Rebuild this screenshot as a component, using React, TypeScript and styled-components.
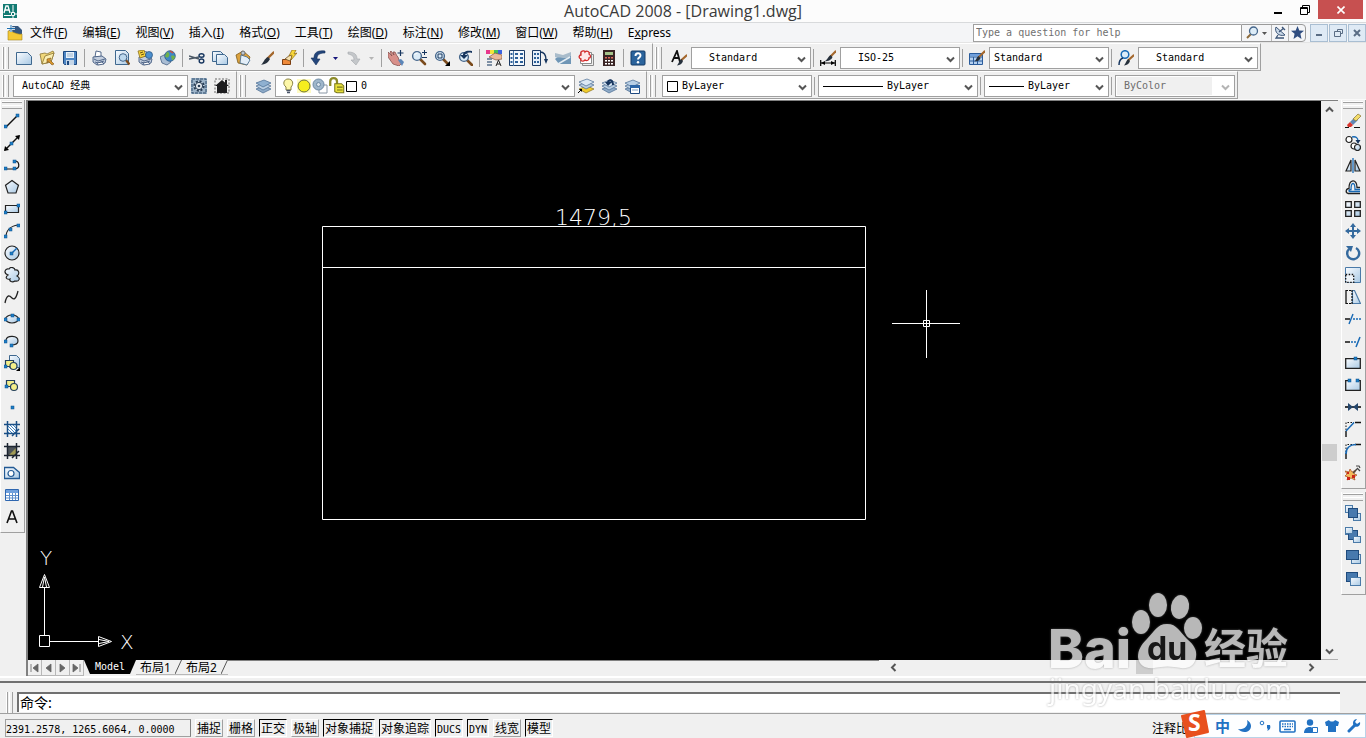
import React from "react";
import styled, { createGlobalStyle, css } from "styled-components";

const mono = `"DejaVu Sans Mono", "Noto Sans CJK SC", monospace`;
const ui = `"Noto Sans", "Noto Sans CJK SC", sans-serif`;
const face = "#f0f0f0";
const shade = "#a0a0a0";

const GlobalStyle = createGlobalStyle`
  * { box-sizing: border-box; }
  body { margin: 0; background: ${face}; font-family: ${ui}; font-size: 12px; color: #000; }
  button, input, select { font: inherit; color: inherit; margin: 0; padding: 0; border: 0; background: none; border-radius: 0; }
  svg { display: block; flex: none; }
`;

const Window = styled.div`
  display: flex;
  flex-direction: column;
  min-height: 100vh;
  position: relative;
  overflow: hidden;
`;

const TitleBar = styled.header`
  display: grid;
  grid-template-columns: 1fr auto 1fr;
  height: 23px;
  background: #fcfcfc;
  border-bottom: 1px solid #d8dadc;
`;
const TitleIcon = styled.div`
  padding: 4px 3px;
`;
const Title = styled.h1`
  margin: 0;
  font: 400 16px/23px "Open Sans", sans-serif;
  color: #3a3a3a;
`;
const WindowButtons = styled.div`
  display: flex;
  justify-content: flex-end;
  padding-right: 3px;
`;
const WindowButton = styled.button<{ $close?: boolean }>`
  width: ${(p) => (p.$close ? 45 : 27)}px;
  height: 19px;
  display: grid;
  place-items: center;
  background: ${(p) => (p.$close ? "#c75050" : "transparent")};
`;

const MenuBar = styled.nav`
  display: flex;
  align-items: center;
  height: 20px;
  background: #f4f5f7;
  border-bottom: 1px solid #e4e4e4;
  padding-left: 7px;
`;
const Menus = styled.div`
  display: flex;
  flex: 1;
  gap: 15px;
  padding-left: 7px;
`;
const MenuItem = styled.button`
  line-height: 19px;
  white-space: nowrap;
  u { text-underline-offset: 1px; }
`;
const HelpSearch = styled.input`
  width: 268px;
  height: 18px;
  padding: 0 2px;
  background: #fff;
  border: 1px solid ${shade};
  border-right: 0;
  font: 10px/16px ${mono};
  &::placeholder { color: #707070; opacity: 1; }
`;
const InfoGroup = styled.div`
  display: flex;
  height: 18px;
  border: 1px solid #9a9a9a;
  border-radius: 0 4px 4px 0;
  margin-right: 4px;
`;
const InfoButton = styled.button<{ $wide?: boolean }>`
  width: ${(p) => (p.$wide ? 29 : 17)}px;
  display: flex;
  align-items: center;
  justify-content: center;
  gap: 3px;
  & + & { border-left: 1px solid #b4b4b4; }
`;
const ChildButtons = styled.div`
  display: flex;
  gap: 1px;
`;
const ChildButton = styled.button`
  width: 18px;
  height: 18px;
  display: grid;
  place-items: center;
  border: 1px solid #a9bed2;
  background: #dfeaf5;
`;

const ToolbarRow = styled.div`
  display: flex;
  height: 28px;
`;
const Bar = styled.div`
  display: flex;
  align-items: center;
  height: 28px;
  padding: 2px 2px 0 3px;
  border-right: 1px solid ${shade};
  border-bottom: 1px solid ${shade};
  border-top: 1px solid #fff;
`;
const Grip = styled.div<{ $flat?: boolean; $gap?: number }>`
  flex: none;
  border: solid ${shade};
  ${(p) =>
    p.$flat
      ? css`
          height: 7px;
          margin: 2px 2px 1px 1px;
          border-width: 1px 0;
          box-shadow: 0 -1px #fff, inset 0 -2px ${face}, inset 0 -3px #fff;
        `
      : css`
          width: 6px;
          height: 22px;
          margin-right: ${p.$gap ?? 4}px;
          border-width: 0 1px;
          box-shadow: -1px 0 #fff, inset -2px 0 ${face}, inset -3px 0 #fff;
        `}
`;
const ToolButton = styled.button<{ $narrow?: boolean }>`
  flex: none;
  width: ${(p) => (p.$narrow ? 13 : 23)}px;
  height: 22px;
  padding: 3px;
`;
const Separator = styled.div`
  flex: none;
  width: 6px;
  height: 18px;
  background: linear-gradient(${shade}, ${shade}) 2px 0 / 1px 100% no-repeat;
`;
const ComboBox = styled.label<{ $width: number; $off?: boolean }>`
  position: relative;
  display: flex;
  align-items: center;
  width: ${(p) => p.$width}px;
  height: 22px;
  border: 1px solid ${shade};
  background: ${(p) => (p.$off ? face : "#fff")};
  box-shadow: ${(p) => (p.$off ? "inset 0 0 0 1px #fff, inset -22px 0 #fff" : "none")};
`;
const ComboLead = styled.span`
  display: flex;
  align-items: center;
  padding-left: 4px;
`;
const ComboSelect = styled.select<{ $indent: number }>`
  appearance: none;
  flex: 1;
  min-width: 0;
  height: 20px;
  padding: 0 18px 0 ${(p) => p.$indent}px;
  font: 10px/20px ${mono};
  outline: 0;
  &:disabled { opacity: 1; color: #6d6d6d; }
`;
const ComboArrow = styled.span`
  position: absolute;
  right: 4px;
  top: 7px;
  pointer-events: none;
`;

const Main = styled.main`
  display: flex;
  flex: 1;
  border-top: 1px solid #fafafa;
`;
const SideColumn = styled.aside`
  width: 26px;
  flex: none;
`;
const SideBar = styled.div<{ $right?: boolean }>`
  display: flex;
  flex-direction: column;
  padding: 0 0 4px;
  border-right: 1px solid ${shade};
  border-bottom: 1px solid ${shade};
  border-left: 1px solid #fff;
  margin: ${(p) => (p.$right ? "0 0 3px 1px" : "0 1px 3px 0")};
`;
const SideButton = styled.button`
  width: 23px;
  height: 22px;
  padding: 3px;
`;
const Workspace = styled.section`
  flex: 1;
  min-width: 0;
  display: flex;
  flex-direction: column;
  border-left: 2px solid #808080;
  border-top: 1px solid #808080;
  margin-right: 2px;
`;
const ViewRow = styled.div`
  flex: 1;
  display: flex;
`;
const Canvas = styled.div`
  flex: 1;
  position: relative;
  overflow: hidden;
  background: #000;
`;
const Model = styled.svg`
  position: absolute;
  inset: 0;
  width: 100%;
  height: 100%;
  text { font: 200 22px "DejaVu Sans", "DejaVu Sans Light", sans-serif; }
`;
const UcsIcon = styled.svg`
  position: absolute;
  left: 0;
  bottom: 0;
  text { font: 200 20px "DejaVu Sans", "DejaVu Sans Light", sans-serif; }
`;
const VScroll = styled.div`
  width: 17px;
  display: flex;
  flex-direction: column;
  align-items: center;
  padding: 4px 0 3px;
  border-bottom: 1px solid #b0b0b0;
`;
const Track = styled.div<{ $share: number }>`
  flex: ${(p) => p.$share};
`;
const Thumb = styled.div<{ $h?: boolean }>`
  width: ${(p) => (p.$h ? 17 : 15)}px;
  height: ${(p) => (p.$h ? 14 : 17)}px;
  background: #cdcdcd;
`;
const TabRow = styled.div`
  display: flex;
  height: 16px;
  align-items: stretch;
`;
const TabNav = styled.button`
  width: 14px;
  display: grid;
  place-items: center;
  border-right: 1px solid #b8b8b8;
  border-bottom: 1px solid #b8b8b8;
`;
const ModelTab = styled.button`
  width: 52px;
  height: 14px;
  background: #000;
  color: #fff;
  clip-path: polygon(0 0, 100% 0, 46px 100%, 6px 100%);
  font: 10px/14px ${mono};
`;
const LayoutTab = styled.button`
  width: 46px;
  height: 15px;
  display: flex;
  justify-content: space-between;
  padding-left: 4px;
  font: 12px/15px ${ui};
  border-bottom: 1px solid #b8b8b8;
`;
const TabFill = styled.div`
  flex: 649;
  border-top: 1px solid #808080;
`;
const HScroll = styled.div`
  flex: 425;
  display: flex;
  align-items: center;
  padding: 0 22px 2px 10px;
`;

const CommandPane = styled.div`
  flex: none;
  border-top: 2px solid #fff;
`;
const CommandEdge = styled.div`
  height: 5px;
  border-bottom: 2px solid #707070;
`;
const CommandRow = styled.div`
  display: flex;
  padding: 9px 26px 0 7px;
  height: 30px;
`;
const CommandInput = styled.input`
  flex: 1;
  height: 20px;
  background: #fff;
  border-left: 2px solid #707070;
  border-top: 2px solid #707070;
  padding: 0 0 2px 1px;
  font: 14px/16px "Noto Sans CJK SC", sans-serif;
`;
const StatusBar = styled.footer`
  flex: none;
  display: flex;
  align-items: center;
  gap: 4px;
  height: 25px;
  border-top: 1px solid ${shade};
  padding: 4px 0 0 5px;
`;
const Coordinates = styled.output`
  width: 186px;
  height: 18px;
  border: 1px solid ${shade};
  border-right-color: #808080;
  font: 10px/19px ${mono};
  white-space: pre;
`;
const Toggle = styled.button<{ $width: number; $on?: boolean; $latin?: boolean }>`
  width: ${(p) => p.$width}px;
  height: 18px;
  padding-top: 1px;
  white-space: nowrap;
  font: ${(p) => (p.$latin ? 10 : 12)}px/17px ${mono};
  border: 1px solid;
  border-color: ${(p) => (p.$on ? "#000 #fff #fff #000" : "#fff #a0a0a0 #a0a0a0 #fff")};
`;
const ScaleLabel = styled.span`
  margin-left: auto;
  padding-right: 178px;
  white-space: nowrap;
`;

const ImeBar = styled.div`
  position: absolute;
  right: 0;
  bottom: 0;
  width: 172px;
  height: 24px;
  display: flex;
  align-items: center;
  justify-content: space-between;
  padding: 0 4px 0 20px;
  background: #fdfeff;
  border: 1px solid #b9d3e8;
`;
const ImeLogo = styled.svg`
  position: absolute;
  left: -15px;
  bottom: -1px;
  overflow: visible;
  text { font: 700 23px "Open Sans", sans-serif; }
`;
const ImeButton = styled.button`
  color: #2272c3;
  font: 700 15px/20px "Noto Sans CJK SC", sans-serif;
`;
const Watermark = styled.svg`
  position: absolute;
  right: 70px;
  bottom: 21px;
  pointer-events: none;
  opacity: 0.72;
  filter: drop-shadow(0 0 1px rgba(120, 120, 120, 0.8));
`;

const N = "#17365f";
const B = "#1769b5";
const sky = "url(#sky)";

const Dot = ({ x, y }: { x: number; y: number }) => (
  <rect x={x} y={y} width="3" height="3" fill="#1e7fc6" stroke="#0d4f8c" strokeWidth=".5" />
);
const Lens = ({ cx = 7, cy = 6 }: { cx?: number; cy?: number }) => (
  <>
    <path d={`M${cx + 3} ${cy + 3}l5 5`} stroke="#7a4a1c" strokeWidth="2.6" strokeLinecap="round" />
    <circle cx={cx} cy={cy} r="4.4" fill="#dcecf8" stroke="#46678c" strokeWidth="1.4" />
    <path d={`M${cx - 2.4} ${cy - 1}a3 3 0 0 1 3-2`} stroke="#fff" fill="none" />
  </>
);
const Brush = () => (
  <>
    <path d="M15.500 2.500L9.500 8.500" stroke="#a4672c" strokeWidth="2.400" strokeLinecap="round" />
    <path d="M10 7l2 2c-2 4-5 5-9 6 3-3 3-6 7-8z" fill="#26303c" />
  </>
);
const SmallBrush = () => (
  <>
    <path d="M15.500 5.500l-5 4.500" stroke="#a4672c" strokeWidth="2.200" strokeLinecap="round" />
    <path d="M10.500 9l1.500 2c-1 3-3 4-6 4.500 2-2 2-5 4.500-6.500z" fill="#26303c" />
  </>
);
const Sheets = ({ top = "#a9c4dd" }: { top?: string }) => (
  <g strokeWidth=".7">
    <path d="M1 11l8-3 7 3-8 4z" fill="#8fabc8" stroke="#486a90" />
    <path d="M1 8l8-3 7 3-8 4z" fill="#b9cee2" stroke="#486a90" />
    <path d="M1 5l8-3 7 3-8 4z" fill={top} stroke="#486a90" />
  </g>
);
const Printer = () => (
  <g stroke="#445b80" strokeWidth=".9">
    <path d="M4 7l1-6 5 1v5z" fill="#fff" />
    <path d="M2 7l9-1 4 3-1 4-8 2-4-3z" fill="#c3cede" />
    <path d="M3 9l4 2 7-2M4 12l3 1 6-2" fill="none" />
    <path d="M6 13l5-1 2 2-6 1z" fill="#fff" />
  </g>
);
const Squares = ({ k }: { k: number }) => {
  const light = { fill: sky, stroke: "#4a7aa8" };
  const dark = { fill: "#4779ae", stroke: "#1f4b7d" };
  return (
    <g>
      {k < 2 && <rect x=".5" y=".5" width="7" height="7" {...light} />}
      {k === 0 && <rect x="8.500" y="8.500" width="7" height="7" {...light} />}
      {k < 2 && <rect x="3.500" y="3.500" width="9" height="9" {...dark} />}
      {k === 1 && <rect x="8.500" y="9.500" width="7" height="6" {...light} />}
      {k === 1 && <rect x=".5" y=".5" width="7" height="6" {...light} />}
      {k === 2 && <rect x="6.500" y="5.500" width="9" height="9" {...light} />}
      {k === 2 && <rect x="1.500" y="1.500" width="12" height="9" {...dark} />}
      {k === 3 && <rect x="1.500" y="1.500" width="11" height="9" {...dark} />}
      {k === 3 && <rect x="5.500" y="6.500" width="10" height="8" {...light} />}
    </g>
  );
};
const Hatch = ({ solid }: { solid?: boolean }) => (
  <>
    <rect x="3" y="3" width="10" height="10" fill={solid ? "#4c5359" : "#fff"} />
    {solid ? (
      <path d="M4 13L13 4v9z" fill="#a09a55" />
    ) : (
      <path d="M3 10l3 3M3 7l6 6M3 4l9 9M5 3l8 8M8 3l5 5M11 3l2 2" stroke={B} strokeWidth=".8" />
    )}
    <path d="M3.500 0v16M12.500 0v16M0 3.500h16M0 12.500h16M8 15l7-7" stroke={solid ? "#1c2430" : "#1a4f86"} strokeWidth="1.500" fill="none" />
  </>
);

const icons: Record<string, React.ReactNode> = {
  new: <path d="M.5 2.500h11l4 4v8H.5z" fill={sky} stroke="#3f688f" />,
  open: (
    <>
      <path d="M1 4l5-1 2 1 6-3 1 2-3 9-9 2z" fill="#f0d77a" stroke="#8a7432" strokeWidth=".8" />
      <path d="M3 14L6 6l9-3-3 9z" fill="#fbeeb0" stroke="#8a7432" strokeWidth=".8" />
      <path d="M8 9l4-1-1 2 4 4-2 1-4-4-1 2z" fill="#d8952c" stroke="#80551a" strokeWidth=".6" />
    </>
  ),
  save: (
    <>
      <path d="M1.500 1.500h13v13h-12l-1-1z" fill="#4e86c4" stroke="#1d4880" />
      <path d="M4 2h8v6H4z" fill="#eaf2fa" />
      <path d="M5 4h6M5 6h6" stroke="#9ab4ce" />
      <path d="M4 10h8v5H4z" fill="#c5d6e8" />
      <path d="M5 11h2v4H5z" fill="#1d4880" />
    </>
  ),
  plot: <Printer />,
  preview: (
    <>
      <path d="M1.500.5h10l3 3v11h-13z" fill={sky} stroke="#3f688f" />
      <path d="M11.500 9.500l4 5" stroke="#7a4a1c" strokeWidth="2.200" />
      <circle cx="9" cy="7.500" r="3.800" fill="#bcd8ee" stroke="#46678c" />
    </>
  ),
  publish: (
    <>
      <Printer />
      <path d="M1 1l6-1 2 6-6 2z" fill="#f5d23c" stroke="#8a7020" strokeWidth=".8" />
      <circle cx="12" cy="5" r="3.500" fill="#4c8fce" stroke="#23507c" strokeWidth=".7" />
      <path d="M3 3l3-1M4 5l3-1" stroke="#6b5512" />
    </>
  ),
  web: (
    <>
      <path d="M0 7l6-3 5 8-4 3-5-2z" fill="#a9bdd4" stroke="#476184" strokeWidth=".8" />
      <circle cx="10" cy="6" r="5.300" fill="#3f87c6" stroke="#23507c" strokeWidth=".7" />
      <path d="M7 2c2 0 3 2 2 4s-3 2-4 0zM11 6c2-1 4 0 4 1s-2 4-3 3z" fill="#70b04a" />
      <path d="M10 1l3 2" stroke="#d84a32" strokeWidth="1.500" />
    </>
  ),
  cut: (
    <g fill="none">
      <path d="M0 6l10 3M0 9l10-2" stroke="#4c5966" strokeWidth="1.500" />
      <ellipse cx="12.500" cy="5.500" rx="2.500" ry="1.800" stroke={N} strokeWidth="1.400" />
      <ellipse cx="12.500" cy="11" rx="2.300" ry="2" stroke={N} strokeWidth="1.400" />
    </g>
  ),
  copyclip: (
    <g fill={sky} stroke="#3f688f">
      <path d="M.5 1.500h8l3 3v7H.5z" />
      <path d="M4.500 4.500h8l3 3v7h-11z" />
    </g>
  ),
  paste: (
    <>
      <path d="M1 5l7-4 7 6-3 8-9-2z" fill="#dca23c" stroke="#7c5a1c" strokeWidth=".8" />
      <path d="M6 5l6 2 3 3-3 5-7-2z" fill="#e3eef8" stroke="#3f688f" strokeWidth=".8" />
      <circle cx="8" cy="3" r="2" fill="#b9c6d4" stroke="#555" strokeWidth=".7" />
    </>
  ),
  brush: <Brush />,
  match: (
    <>
      <path d="M1.500 9.500h8v5h-8z" fill="#ef8a3a" stroke="#7c3d10" />
      <path d="M4 9l5-4 2 2-2 4z" fill="#f7e2b0" stroke="#6b4a20" strokeWidth=".8" />
      <path d="M11 0l-3 6 3-1-1 5 6-7-3 1 2-4z" fill="#f8d83a" stroke="#8a6410" strokeWidth=".7" />
    </>
  ),
  undo: <path d="M15 1C7 0 4 3 4 8H1l5 7 4-6H7c0-4 2-6 8-6z" fill="#24467c" stroke="#16305a" strokeWidth=".6" />,
  redo: <path d="M2 2c7 0 9 3 9 7h3l-4 6-5-5h3c0-3-1-5-6-6z" fill="#c4c7ca" stroke="#a4a8ac" strokeWidth=".6" />,
  pan: (
    <>
      <path d="M0 2l4 4-2-4 1-1 3 4-1-3 2 0 2 4 1 1 1 3 3 3-3 3-6-2-5-7z" fill="#d8908a" stroke="#7b4643" strokeWidth=".7" />
      <path d="M10 10l4 6 2-4-3-3z" fill="#5c86b8" />
      <path d="M12.500 0v6M9.500 3h6" stroke={N} strokeWidth="1.200" />
    </>
  ),
  zoom: (
    <>
      <Lens cx={6} />
      <path d="M13.500 0v5M11 2.500h5M11 7.500h5" stroke={N} />
    </>
  ),
  zoomwin: (
    <>
      <Lens cx={6} />
      <path d="M4 4h4v4H4z" fill="none" stroke={N} />
      <path d="M16 11v5h-5z" />
    </>
  ),
  zoomprev: (
    <>
      <Lens cx={7} cy={7} />
      <path d="M15 1C9 0 6 2 6 5H3l4 4 4-4H8c1-2 3-3 7-2z" fill={N} />
    </>
  ),
  props: (
    <>
      <path d="M0 0h4v4H0z" fill="#e8378c" />
      <path d="M4 0h4v4H4z" fill="#f4e43c" />
      <path d="M8 0h4v4H8z" fill="#44c05a" />
      <path d="M12 0h4v4h-4z" fill="#3c62e0" />
      <path d="M3 7l6-4 7 2v4l-6 1z" fill="#eab99c" stroke="#825138" strokeWidth=".7" />
      <path d="M1 9h5M1 12h5M1 15h5" stroke="#58708c" strokeWidth="1.400" />
      <path d="M10 16l2.500-6 2.500 6M11 14h3" fill="none" stroke="#222" />
    </>
  ),
  dcenter: (
    <>
      <path d="M.5.5h15v15H.5z" fill="#f2f7fc" stroke="#1b3b66" />
      <path d="M4.500 1v15" stroke="#4a78a8" />
      {[3, 7, 11].map((y) => (
        <path key={y} d={`M1.500 ${y}h2v2h-2zM6 ${y}h3v2H6zM11 ${y}h3v2h-3z`} fill="#2c5f98" />
      ))}
    </>
  ),
  palettes: (
    <>
      <path d="M.5.5h8v15h-8z" fill="#e5eef8" stroke="#1b3b66" />
      <path d="M2 3h2v2H2zM2 7h2v2H2zM2 11h2v2H2zM5 3h2v2H5zM5 7h2v2H5zM5 11h2v2H5z" fill="#2c5f98" />
      <path d="M8 2c4 0 6 3 6 8" fill="none" stroke={N} strokeWidth="1.400" />
      <path d="M12 9h4l-2 5z" fill={N} />
    </>
  ),
  sheetset: (
    <>
      <path d="M0 3l8 2 8-3v5l-8 3-8-3z" fill="#a9bccb" />
      <path d="M0 9c4-4 9 2 16-3v8H4z" fill="#6f96b6" />
      <path d="M3 14l12-7" stroke="#e6eef4" strokeWidth="1.500" />
    </>
  ),
  markup: (
    <>
      <path d="M4.500 4.500h11v11h-11z" fill="#eee" stroke="#8a8a8a" />
      <path d="M2.500 2.500h11v11h-11z" fill="#fff" stroke="#8a8a8a" />
      <path d="M3 2c2-2 4-1 4 0 2-2 5 0 4 2 2 1 2 4 0 4 0 3-3 3-4 2-2 2-5 1-4-1-3-1-2-4 0-4z" fill="#fde8e8" stroke="#d42a2a" strokeWidth="1.300" />
    </>
  ),
  calc: (
    <>
      <path d="M2 0h12v16H2z" fill="#3a2424" />
      <path d="M4 2h8v3H4z" fill="#a6c48a" />
      {[7, 10, 13].map((y) => (
        <path key={y} d={`M4 ${y}h2v1.500H4zM7 ${y}h2v1.500H7zM10 ${y}h2v1.500h-2z`} fill={y === 7 ? "#e06a5a" : "#fff"} />
      ))}
    </>
  ),
  help: (
    <>
      <rect x="1" y="1" width="14" height="14" rx="1" fill="#2a639c" stroke="#133a66" />
      <path d="M5.500 6c0-3.500 5-3.500 5-.5 0 2-2.500 2-2.500 4" fill="none" stroke="#fff" strokeWidth="1.900" />
      <circle cx="8" cy="12.200" r="1.200" fill="#fff" />
    </>
  ),
  textstyle: (
    <>
      <path d="M1 12L6 1l3 11M3 8h5" fill="none" stroke="#111" strokeWidth="1.800" />
      <SmallBrush />
    </>
  ),
  dimstyle: (
    <>
      <path d="M15.500 1.500l-5 5" stroke="#a4672c" strokeWidth="2.200" strokeLinecap="round" />
      <path d="M10.500 5l2 2c-1 3-4 4-8 4.500 3-2 3-4 6-6.500z" fill="#26303c" />
      <path d="M.7 10v6M15.300 10v6M1 13h14" stroke="#000" strokeWidth="1.200" />
      <path d="M1 13l4-2v4zM15 13l-4-2v4z" />
    </>
  ),
  tablestyle: (
    <>
      <path d="M.5 3.500h13v11H.5z" fill="#b4d0f0" stroke="#2a5c9c" />
      <path d="M1 4h12v2H1z" fill="#6f9fdc" />
      <path d="M1 7h12M1 11h12M4.500 7v7M8.500 7v7" stroke="#2a5c9c" />
      <path d="M15.500 1.500l-6 6" stroke="#a4672c" strokeWidth="2.200" strokeLinecap="round" />
      <path d="M9.500 6l2 2c-1 3-3 3-6 3.500 2-2 2-4 4-5.500z" fill="#26303c" />
    </>
  ),
  leaderstyle: (
    <>
      <circle cx="7" cy="4.500" r="3.800" fill="#dcecf8" stroke={B} strokeWidth="1.500" />
      <path d="M5 8c-3 1-4 4-4 7" stroke={N} fill="none" strokeWidth="1.500" />
      <SmallBrush />
    </>
  ),
  gear: (
    <>
      <path d="M0 0h16v16H0z" fill="#9db4c9" />
      <path d="M1 1h14v14H1z" fill="none" stroke="#2b4868" strokeDasharray="3 1" />
      <circle cx="8" cy="8" r="4.600" fill="#e8edf2" stroke="#273c54" strokeWidth="2.200" strokeDasharray="2 1.600" />
      <circle cx="8" cy="8" r="3.600" fill="#e8edf2" stroke="#273c54" />
      <circle cx="8" cy="8" r="1.300" fill="#273c54" />
    </>
  ),
  home: (
    <>
      <path d="M1 1h14v14H1z" fill="none" stroke="#666" strokeDasharray="2 1.500" />
      <path d="M8 2l7 6h-2v7H3V8H1z" fill="#1d1d1f" />
      <path d="M11 2h2v4h-2z" fill="#1d1d1f" />
    </>
  ),
  layers: <Sheets top="#8fb0d0" />,
  layercur: (
    <>
      <g strokeWidth=".7">
        <path d="M1 11l8-3 7 3-8 4z" fill="#f0cc2c" stroke="#8a7020" />
        <path d="M1 7l8-3 7 3-8 4z" fill="#b9cee2" stroke="#486a90" />
        <path d="M1 4l8-3 7 3-8 4z" fill="#dbe8f4" stroke="#486a90" />
      </g>
      <path d="M0 15l4-4" stroke="#000" />
      <path d="M1 11h3v3z" />
    </>
  ),
  layerprev: (
    <>
      <Sheets top="#dbe8f4" />
      <path d="M13 7C13 0 7 0 6 4H4l3 4 4-4H8c1-1 3-1 3 3z" fill={N} />
    </>
  ),
  layerstate: (
    <>
      <Sheets top="#b8cfe6" />
      <path d="M6.500 7.500h9v8h-9z" fill="#fff" stroke="#1d4880" />
      <path d="M6 7h10v3H6z" fill="#2f67a8" />
      <path d="M8 12h6" stroke="#7d9cbd" />
    </>
  ),
  bulb: (
    <>
      <path d="M8 1c5 0 6 5 3 8v3H6V9C2 6 4 1 8 1z" fill="#fdf7a8" stroke="#7b7430" strokeWidth=".9" />
      <path d="M6.500 12.500h4M7 14.500h3" stroke="#4a5568" strokeWidth="1.300" />
    </>
  ),
  sun: (
    <>
      <path d="M1 1h14v14H1z" fill="#fffbc4" />
      <circle cx="8" cy="8" r="6" fill="#f6ee1e" stroke="#6f7436" />
    </>
  ),
  freeze: (
    <>
      <path d="M7 7h8v8H7z" fill="#fff" stroke="#8a97a5" />
      <circle cx="6.500" cy="6.500" r="5.500" fill="#9eb6ca" stroke="#6d8aa4" />
      <circle cx="6.500" cy="6.500" r="2" fill="#d9e4ec" stroke="#6d8aa4" />
    </>
  ),
  lock: (
    <>
      <path d="M2 8V4c0-4 6-4 6 0v3" fill="none" stroke="#8c8a28" strokeWidth="2" />
      <path d="M6 6h6l2 2v6H8l-2-1z" fill="#e9e23a" stroke="#77741c" strokeWidth=".9" />
      <path d="M8 9h5M8 11.500h5" stroke="#77741c" />
    </>
  ),
  line: (<><path d="M2 14L14 2" stroke="#111" strokeWidth="1.400" /><Dot x={0} y={12} /><Dot x={12} y={1} /></>),
  xline: (<><path d="M1 15L15 1" stroke="#111" strokeWidth="1.400" /><path d="M0 16l1-5 4 4zM16 0l-5 1 4 4z" /><Dot x={6} y={7} /></>),
  pline: (<><path d="M2 12h9c6-1 4-8 0-8" fill="none" stroke="#111" strokeWidth="1.200" /><Dot x={0} y={10} /><Dot x={9} y={10} /><Dot x={9} y={3} /></>),
  polygon: <path d="M8 1.500l6.500 4.800-2.500 7.700H4L1.500 6.300z" fill={sky} stroke="#222" strokeWidth="1.200" />,
  rect: (<><path d="M1.500 4.500h13v7h-13z" fill={sky} stroke="#222" strokeWidth="1.200" /><Dot x={0} y={10} /><Dot x={13} y={3} /></>),
  arc: (<><path d="M2 14C2 8 6 3 14 2" fill="none" stroke="#222" strokeWidth="1.200" /><Dot x={0} y={12} /><Dot x={5} y={5} /><Dot x={13} y={1} /></>),
  circle: (<><circle cx="8" cy="8" r="7" fill={sky} stroke="#222" strokeWidth="1.200" /><path d="M8 8l5-5" stroke={B} strokeWidth="1.400" /><Dot x={6} y={7} /></>),
  cloud: <path d="M4 8C-1 6 1 1 5 2c2-3 6-1 6 1 4-1 5 4 2 6 4 2 2 6-2 5-3 2-6 0-5-2-4 1-5-2-2-4z" fill={sky} stroke="#222" strokeWidth="1.200" />,
  spline: <path d="M1 14c2-10 5-7 7-5s4 1 6-7" fill="none" stroke="#222" strokeWidth="1.300" />,
  ellipse: (<><ellipse cx="8" cy="8" rx="6.500" ry="4" fill={sky} stroke="#222" strokeWidth="1.200" /><Dot x={0} y={7} /><Dot x={13} y={7} /><Dot x={7} y={3} /></>),
  earc: (<><path d="M2 7c1-5 12-5 12 1 0 3-3 4-7 4" fill={sky} stroke="#222" strokeWidth="1.200" /><Dot x={0} y={7} /><Dot x={6} y={11} /></>),
  insert: (<><path d="M5.500.5h7l3 3v9h-10z" fill={sky} stroke="#3f688f" /><path d="M1.500 5.500h8v6h-8z" fill="#f4ef8a" stroke="#24405c" strokeWidth="1.200" /><circle cx="9.500" cy="11" r="3.500" fill="#f4ef8a" stroke="#24405c" strokeWidth="1.200" /><Dot x={0} y={10} /><path d="M16 12v4h-4z" /></>),
  block: (<><path d="M2.500 3.500h8v6h-8z" fill="#f4ef8a" stroke="#24405c" strokeWidth="1.200" /><circle cx="10" cy="10" r="3.500" fill="#f4ef8a" stroke="#24405c" strokeWidth="1.200" /><Dot x={1} y={8} /></>),
  point: <Dot x={7} y={7} />,
  hatch: <Hatch />,
  gradient: <Hatch solid />,
  region: (<><path d="M.5 2.500h9l6 5v6H.5z" fill={sky} stroke="#235a94" strokeWidth="1.300" /><circle cx="7" cy="8.500" r="3" fill="#fff" stroke="#235a94" strokeWidth="1.200" /></>),
  table: (<><path d="M1.500 2.500h13v11h-13z" fill="#fff" stroke="#2f67b0" /><path d="M2 3h12v3H2z" fill="#6f9fdc" /><path d="M2 8.500h12M2 11h12M5.500 6v7M8.500 6v7M11.500 6v7" stroke="#5f8fcc" /></>),
  mtext: <path d="M3 14L7.500 2h1L13 14M4.500 10h7" fill="none" stroke="#111" strokeWidth="1.600" />,
  erase: (<><path d="M0 14.500h4M9 14.500h6" stroke="#111" strokeWidth="1.200" /><path d="M5 9l5-5 3 3-5 5z" fill="#5f86b4" /><path d="M8 6l5-5 3 2-5 5z" fill="#f3dc6a" stroke="#8a7430" strokeWidth=".7" /><path d="M5 9l3 3-2 2H3l-1-2z" fill="#d8342c" /></>),
  copy: (<><circle cx="4" cy="4.500" r="3" fill="#fff" stroke="#222" strokeWidth="1.200" /><circle cx="9" cy="11" r="3" fill="#fff" stroke="#222" strokeWidth="1.200" /><circle cx="12.500" cy="12.500" r="3" fill={sky} stroke="#222" strokeWidth="1.200" /><path d="M7 2c4-1 6 1 6 4" fill="none" stroke={B} strokeWidth="1.300" /><path d="M10.500 5h5l-2.500 4z" fill={N} /></>),
  mirror: (<><path d="M6 3v11H1zM10 3v11h5z" fill={sky} stroke="#222" strokeWidth="1.200" /><path d="M8 1v15" stroke={B} strokeWidth="1.300" /></>),
  offset: (<><path d="M15 14.500H3c-3-1-2-5 1-5 0-10 8-10 8-1h3" fill="none" stroke="#222" strokeWidth="1.300" /><path d="M15 12.500H5c-2 0-1-2 1-2 0-8 4-8 4 0h5" fill="none" stroke={B} strokeWidth="1.300" /></>),
  array: <path d="M.7.7h5.600v5.600H.7zM9.700.7h5.600v5.600H9.700zM.7 9.700h5.600v5.600H.7zM9.700 9.700h5.600v5.600H9.700z" fill={sky} stroke="#222" strokeWidth="1.300" />,
  move: (<><path d="M8 2v12M2 8h12" stroke="#356a9e" strokeWidth="2" /><path d="M8 0l3 4H5zM8 16l3-4H5zM0 8l4-3v6zM16 8l-4-3v6z" fill="#356a9e" /></>),
  rotate: (<><path d="M4 4a6 6 0 1 0 7-1" fill="none" stroke="#356a9e" strokeWidth="2.400" /><path d="M1 1l7 0-2 6z" fill="#356a9e" /></>),
  scale: (<><path d="M.5.5h15v15H.5z" fill={sky} stroke="#4a7aa8" /><path d="M.7 7.500h8v8h-8z" fill="#eef3f8" stroke="#111" strokeWidth="1.300" strokeDasharray="1.500 1.500" /></>),
  stretch: (<><path d="M7.500 1.500h2l6 13h-8z" fill={sky} stroke="#4a7aa8" strokeWidth="1.200" /><path d="M1 1.500h6M1 14.500h6M7 1v14" stroke="#111" strokeWidth="1.200" strokeDasharray="2 1" /><path d="M1 1v14" stroke="#111" strokeWidth="1.300" /></>),
  trim: (<><path d="M0 8h5" stroke="#111" strokeWidth="1.500" /><path d="M4 13l4-10" stroke={B} strokeWidth="1.400" /><path d="M8 8h8" stroke={B} strokeWidth="1.300" strokeDasharray="2 1" /></>),
  extend: (<><path d="M0 9h5" stroke="#111" strokeWidth="1.500" /><path d="M6 9h5" stroke={B} strokeWidth="1.300" strokeDasharray="2 1" /><path d="M11 14l4-10" stroke={B} strokeWidth="1.500" /></>),
  breakpt: (<><path d="M.7 3.700h14.600v9.600H.7z" fill={sky} stroke="#222" strokeWidth="1.300" /><Dot x={9} y={2} /></>),
  break: (<><path d="M4 3.700H.7v9.600h14.600V3.700H13" fill={sky} stroke="#222" strokeWidth="1.300" /><Dot x={3} y={2} /><Dot x={11} y={2} /></>),
  join: (<><path d="M0 8h16" stroke="#111" strokeWidth="1.600" /><path d="M3 4l5 4-5 4zM13 4L8 8l5 4z" fill="#24466c" /></>),
  chamfer: (<><path d="M1 10v6M10 1.500h6" stroke="#111" strokeWidth="1.400" /><path d="M1 9V1.500h8" fill="none" stroke="#111" strokeDasharray="1.500 1.500" /><path d="M1 10l8-8.500" stroke={B} strokeWidth="1.500" /></>),
  fillet: (<><path d="M1 10v6M10 1.500h6" stroke="#111" strokeWidth="1.400" /><path d="M1 9V1.500h8" fill="none" stroke="#111" strokeDasharray="1.500 1.500" /><path d="M1 11c0-6 4-9.500 10-9.500" fill="none" stroke={B} strokeWidth="1.700" /></>),
  explode: (<><path d="M0 6l4 1 1-3 2 3 4-2-2 4 3 1-3 2 1 3-4-2-4 2 1-3-3-1 2-2z" fill="#f2b95a" stroke="#a3481c" strokeWidth=".7" /><path d="M2 7h2v2H2zM7 10h3v3H7zM2 12h3v3H2z" fill="#cc2418" /><path d="M8 8l5-5M11 1h3l1 2M13 4l2 2" stroke="#444" strokeWidth="1.200" fill="none" /></>),
  front: <Squares k={0} />,
  back: <Squares k={1} />,
  above: <Squares k={2} />,
  under: <Squares k={3} />,
};

const Icon = ({ name, size = 16 }: { name: string; size?: number }) => (
  <svg width={size} height={size} viewBox="0 0 16 16" aria-hidden="true">{icons[name]}</svg>
);
const Tiny = ({ color = "#17365f" }: { color?: string }) => (
  <svg width="5" height="16" viewBox="0 0 5 16"><path d="M0 7h5l-2.500 3z" fill={color} /></svg>
);
const Chevron = ({ turn = 0, color = "#555" }: { turn?: number; color?: string }) => (
  <svg width="9" height="9" viewBox="0 0 9 9">
    <path d="M1 2.500l3.500 3.500L8 2.500" fill="none" stroke={color} strokeWidth="2" transform={`rotate(${turn} 4.500 4.500)`} />
  </svg>
);
const Tools = ({ names }: { names: string[] }) => (
  <>{names.map((n) => <ToolButton key={n} aria-label={n}><Icon name={n} /></ToolButton>)}</>
);
const SideTools = ({ names, right }: { names: string[]; right?: boolean }) => (
  <SideBar $right={right}>
    <Grip $flat />
    {names.map((n) => <SideButton key={n} aria-label={n}><Icon name={n} /></SideButton>)}
  </SideBar>
);
type ComboProps = { label: string; value: string; width: number; indent?: number; off?: boolean; children?: React.ReactNode };
const Combo = ({ label, value, width, indent = 17, off, children }: ComboProps) => (
  <ComboBox $width={width} $off={off}>
    {children && <ComboLead>{children}</ComboLead>}
    <ComboSelect $indent={indent} aria-label={label} disabled={off}><option>{value}</option></ComboSelect>
    <ComboArrow><Chevron color={off ? "#b4b4b4" : "#555"} /></ComboArrow>
  </ComboBox>
);
const Swatch = () => (
  <svg width="11" height="11" viewBox="0 0 11 11"><path d="M.5.5h10v10H.5z" fill="#fff" stroke="#000" /></svg>
);
const Rule = ({ width }: { width: number }) => (
  <svg width={width} height="1"><path d={`M0 .5h${width}`} stroke="#000" /></svg>
);

const menus = [
  ["文件", "F"], ["编辑", "E"], ["视图", "V"], ["插入", "I"], ["格式", "O"], ["工具", "T"],
  ["绘图", "D"], ["标注", "N"], ["修改", "M"], ["窗口", "W"], ["帮助", "H"],
];
const draw = ["line", "xline", "pline", "polygon", "rect", "arc", "circle", "cloud", "spline", "ellipse", "earc", "insert", "block", "point", "hatch", "gradient", "region", "table", "mtext"];
const modify = ["erase", "copy", "mirror", "offset", "array", "move", "rotate", "scale", "stretch", "trim", "extend", "breakpt", "break", "join", "chamfer", "fillet", "explode"];
const toggles: [string, number, boolean][] = [
  ["捕捉", 28, false], ["栅格", 28, false], ["正交", 28, true], ["极轴", 28, false], ["对象捕捉", 52, true],
  ["对象追踪", 52, true], ["DUCS", 28, true], ["DYN", 22, true], ["线宽", 28, false], ["模型", 28, true],
];
const tabArrows = ["M2 1v8M9 1v8L4 5z", "M8 1v8L3 5z", "M3 1v8l5-4z", "M9 1v8M2 1v8l5-4z"];

export default function App() {
  return (
    <Window>
      <GlobalStyle />
      <TitleBar>
        <TitleIcon>
          <svg width="15" height="15" viewBox="0 0 15 15">
            <path d="M0 0h14v14H0z" fill="#127a72" />
            <path d="M1 9l2-7h2l2 7M2 6h4" fill="none" stroke="#fff" strokeWidth="1.300" />
            <path d="M8.500 8.500h3v3h-3zM12 10h3M10 12v3M10 1v7M1 11.500h7" fill="none" stroke="#fff" />
          </svg>
        </TitleIcon>
        <Title>AutoCAD 2008 - [Drawing1.dwg]</Title>
        <WindowButtons>
          <WindowButton aria-label="Minimize"><svg width="8" height="10"><path d="M0 7h8v2H0z" /></svg></WindowButton>
          <WindowButton aria-label="Restore"><svg width="10" height="10"><path d="M2.500 2.500v-2h7v7h-2M.5 2.500h7v7h-7zM.5 3.500h7" fill="none" stroke="#000" /></svg></WindowButton>
          <WindowButton $close aria-label="Close"><svg width="8" height="8"><path d="M.5.5l7 7M7.500.5l-7 7" stroke="#fff" strokeWidth="1.600" /></svg></WindowButton>
        </WindowButtons>
      </TitleBar>

      <MenuBar>
        <svg width="16" height="16" viewBox="0 0 16 16">
          <path d="M4 1h7l4 4v9H2V4z" fill="#35577f" />
          <path d="M1 6c3-1 8 4 14 3v6H1z" fill="#f4c936" stroke="#a5841c" strokeWidth=".6" />
          <path d="M4 0v7M0 3.500h8" stroke="#fff" strokeWidth="2.400" />
          <path d="M4 0v7M0 3.500h8" stroke="#1c6fb0" />
        </svg>
        <Menus>
          {menus.map(([t, k]) => <MenuItem key={k}>{t}(<u>{k}</u>)</MenuItem>)}
          <MenuItem>E<u>x</u>press</MenuItem>
        </Menus>
        <HelpSearch placeholder="Type a question for help" aria-label="Type a question for help" />
        <InfoGroup>
          <InfoButton $wide aria-label="Search"><svg width="13" height="13" viewBox="0 0 13 13"><path d="M5 8l-4 4" stroke="#8c6a3c" strokeWidth="2" /><circle cx="7.500" cy="5" r="4" fill="#dcecf8" stroke="#46678c" strokeWidth="1.300" /></svg><Tiny color="#555" /></InfoButton>
          <InfoButton aria-label="Communication Center"><svg width="13" height="13" viewBox="0 0 13 13"><path d="M2 1c-2 5 3 10 9 8z" fill="#c9d8e8" stroke="#3c5578" /><path d="M5 6l5-4M8 1l3 3M4 9l-2 3h8" fill="none" stroke="#3c5578" strokeWidth="1.300" /></svg></InfoButton>
          <InfoButton aria-label="Favorites"><svg width="13" height="13" viewBox="0 0 13 13"><path d="M6.500 0l1.800 4.500 4.700.3-3.600 3L10.500 13l-4-2.700-4 2.700 1.100-5.200L0 4.800l4.700-.3z" fill="#2f4d80" /></svg></InfoButton>
        </InfoGroup>
        <ChildButtons>
          <ChildButton aria-label="Minimize drawing"><svg width="8" height="8"><path d="M1 5h6v2H1z" fill="#5a6d85" /></svg></ChildButton>
          <ChildButton aria-label="Restore drawing"><svg width="9" height="8"><path d="M3.500 2.500v-2h5v4h-2M.5 2.500h6v5h-6z" fill="none" stroke="#5a6d85" /></svg></ChildButton>
          <ChildButton aria-label="Close drawing"><svg width="8" height="8"><path d="M1 1l6 6M7 1l-6 6" stroke="#5a6d85" strokeWidth="2" /></svg></ChildButton>
        </ChildButtons>
      </MenuBar>

      <ToolbarRow>
        <Bar>
          <Grip />
          <Tools names={["new", "open", "save"]} />
          <Separator />
          <Tools names={["plot", "preview", "publish", "web"]} />
          <Separator />
          <Tools names={["cut", "copyclip", "paste", "brush", "match"]} />
          <Separator />
          <Tools names={["undo"]} />
          <ToolButton $narrow aria-label="Undo list"><Tiny color="#16167c" /></ToolButton>
          <Tools names={["redo"]} />
          <ToolButton $narrow aria-label="Redo list"><Tiny color="#b4b4b4" /></ToolButton>
          <Separator />
          <Tools names={["pan", "zoom", "zoomwin", "zoomprev"]} />
          <Separator />
          <Tools names={["props", "dcenter", "palettes", "sheetset", "markup", "calc"]} />
          <Separator />
          <Tools names={["help"]} />
        </Bar>
        <Bar>
          <Grip $gap={6} />
          <Tools names={["textstyle"]} />
          <Combo label="Text style" value="Standard" width={120} />
          <Separator />
          <Tools names={["dimstyle"]} />
          <Combo label="Dimension style" value="ISO-25" width={120} />
          <Separator />
          <Tools names={["tablestyle"]} />
          <Combo label="Table style" value="Standard" width={120} indent={4} />
          <Separator />
          <Tools names={["leaderstyle"]} />
          <Combo label="Multileader style" value="Standard" width={120} />
        </Bar>
      </ToolbarRow>
      <ToolbarRow>
        <Bar>
          <Grip />
          <Combo label="Workspace" value="AutoCAD 经典" width={175} indent={8} />
          <Tools names={["gear", "home"]} />
        </Bar>
        <Bar>
          <Grip $gap={6} />
          <Tools names={["layers"]} />
          <Combo label="Layer" value="0" width={300} indent={4}>
            <Icon name="bulb" /><Icon name="sun" /><Icon name="freeze" /><Icon name="lock" size={18} /><Swatch />
          </Combo>
          <Tools names={["layercur", "layerprev", "layerstate"]} />
        </Bar>
        <Bar>
          <Grip $gap={6} />
          <Combo label="Color" value="ByLayer" width={150} indent={4}><Swatch /></Combo>
          <Separator />
          <Combo label="Linetype" value="ByLayer" width={160} indent={4}><Rule width={60} /></Combo>
          <Separator />
          <Combo label="Lineweight" value="ByLayer" width={125} indent={4}><Rule width={35} /></Combo>
          <Separator />
          <Combo label="Plot style" value="ByColor" width={120} indent={8} off />
        </Bar>
      </ToolbarRow>

      <Main>
        <SideColumn><SideTools names={draw} /></SideColumn>
        <Workspace>
          <ViewRow>
            <Canvas>
              <Model stroke="#fff" fill="none">
                <path d="M294.500 125.500h543v293h-543zM294.500 166.500h543" />
                <path d="M864 222.500h68M898.500 189v68M895.500 219.500h6v6h-6z" />
                <text x="527" y="124" fill="#fff" stroke="none">1479,5</text>
              </Model>
              <UcsIcon width="110" height="120" stroke="#fff" fill="none">
                <path d="M11.500 95.500h10v11h-10zM16.500 95V48M22 101.500h48M11.500 47.500h10l-5-13zM70.500 96.500v10l13-5zM14.500 47l2-10 2 10M71 99.500l10 2-10 2" />
                <text x="12" y="25" fill="#fff" stroke="none">Y</text>
                <text x="92" y="109" fill="#fff" stroke="none">X</text>
              </UcsIcon>
            </Canvas>
            <VScroll>
              <Chevron turn={180} />
              <Track $share={330} />
              <Thumb />
              <Track $share={186} />
              <Chevron />
            </VScroll>
          </ViewRow>
          <TabRow>
            {tabArrows.map((d) => (
              <TabNav key={d} aria-label="Scroll tabs"><svg width="11" height="10"><path d={d} fill="#666" stroke="#666" strokeWidth=".8" /></svg></TabNav>
            ))}
            <ModelTab>Model</ModelTab>
            {["布局1", "布局2"].map((t) => (
              <LayoutTab key={t}>{t}<svg width="7" height="14"><path d="M0 14L6.500 0" stroke="#555" /></svg></LayoutTab>
            ))}
            <TabFill />
            <HScroll>
              <Chevron turn={90} />
              <Track $share={238} />
              <Thumb $h />
              <Track $share={154} />
              <Chevron turn={-90} />
            </HScroll>
          </TabRow>
        </Workspace>
        <SideColumn>
          <SideTools right names={modify} />
          <SideTools right names={["front", "back", "above", "under"]} />
        </SideColumn>
      </Main>

      <CommandPane>
        <CommandEdge />
        <CommandRow>
          <Grip $gap={4} />
          <CommandInput aria-label="Command line" defaultValue="命令: " />
        </CommandRow>
      </CommandPane>
      <StatusBar>
        <Coordinates>2391.2578, 1265.6064, 0.0000</Coordinates>
        {toggles.map(([t, w, on]) => (
          <Toggle key={t} $width={w} $on={on} $latin={/^[A-Z]+$/.test(t)} aria-pressed={on}>{t}</Toggle>
        ))}
        <ScaleLabel>注释比</ScaleLabel>
      </StatusBar>

      <Watermark width="250" height="124" fill="#fff">
        <ellipse cx="95" cy="29" rx="9" ry="12" />
        <ellipse cx="112" cy="12" rx="9" ry="12" />
        <ellipse cx="134" cy="14" rx="9" ry="12" transform="rotate(10 134 14)" />
        <ellipse cx="147" cy="35" rx="9" ry="11" />
        <path d="M121 31c10 0 13 8 20 15 7 6 10 11 9 18-1 9-8 12-15 11-9-2-18-2-27 0-8 1-15-2-16-11 0-7 3-12 9-18 7-7 10-15 20-15z" />
        <text x="2" y="75" fontFamily="Inter, sans-serif" fontWeight="800" fontSize="54">Bai</text>
        <text x="101" y="67" fontFamily="Inter, sans-serif" fontWeight="700" fontSize="32" fill="#222">du</text>
        <text x="158" y="71" fontFamily="Noto Sans CJK SC, sans-serif" fontWeight="700" fontSize="42">经验</text>
        <text x="3" y="106" fontFamily="Noto Sans, sans-serif" fontSize="28">jingyan.baidu.com</text>
      </Watermark>

      <ImeBar>
        <ImeLogo width="29" height="28" viewBox="0 0 29 28">
          <path d="M2 6L24 1l4 21-21 5z" fill="#e8501e" stroke="#e8501e" strokeWidth="2" strokeLinejoin="round" />
          <text x="8" y="21" fill="#fff">S</text>
        </ImeLogo>
        <ImeButton>中</ImeButton>
        <ImeButton aria-label="Moon"><svg width="14" height="14"><path d="M9 1c5 3 5 8 2 10.500s-8 2-11-1.500c6 1 11-3 9-9z" fill="#2272c3" /></svg></ImeButton>
        <ImeButton aria-label="Punctuation"><svg width="13" height="14"><circle cx="3" cy="4" r="1.800" fill="none" stroke="#2272c3" /><path d="M8 6h3c1 3 0 5-3 6 1-1 1-2 0-3z" fill="#2272c3" /></svg></ImeButton>
        <ImeButton aria-label="Keyboard"><svg width="17" height="13"><rect x="1" y="1" width="15" height="11" rx="1" fill="#fff" stroke="#2272c3" strokeWidth="1.600" /><path d="M3 4h11M3 6.500h11" stroke="#2272c3" strokeWidth="1.500" strokeDasharray="1.500 1" /><path d="M5 9.500h7" stroke="#2272c3" strokeWidth="1.500" /></svg></ImeButton>
        <ImeButton aria-label="Account"><svg width="14" height="15"><circle cx="6" cy="3.500" r="3.200" fill="#2272c3" /><path d="M0 14c0-8 11-8 12 0z" fill="#2272c3" /><path d="M8.500 8.500h5v5h-5z" fill="#fff" stroke="#2272c3" /></svg></ImeButton>
        <ImeButton aria-label="Skin"><svg width="14" height="14"><path d="M4 1c1 2 5 2 6 0l4 2-1 4h-2v6H3V7H1L0 3z" fill="#2272c3" /></svg></ImeButton>
        <ImeButton aria-label="Settings"><svg width="14" height="14"><path d="M2 12l6-6" stroke="#2272c3" strokeWidth="3" strokeLinecap="round" /><path d="M13 3l-3 2-2-2 2-3C6 0 5 4 7 7c3 2 7 0 6-4z" fill="#2272c3" /></svg></ImeButton>
      </ImeBar>

      <svg width="0" height="0" style={{ position: "absolute" }}>
        <defs>
          <linearGradient id="sky" x1="0" y1="0" x2="1" y2="1">
            <stop offset="0" stopColor="#fafcff" />
            <stop offset="1" stopColor="#a9c9e4" />
          </linearGradient>
        </defs>
      </svg>
    </Window>
  );
}
